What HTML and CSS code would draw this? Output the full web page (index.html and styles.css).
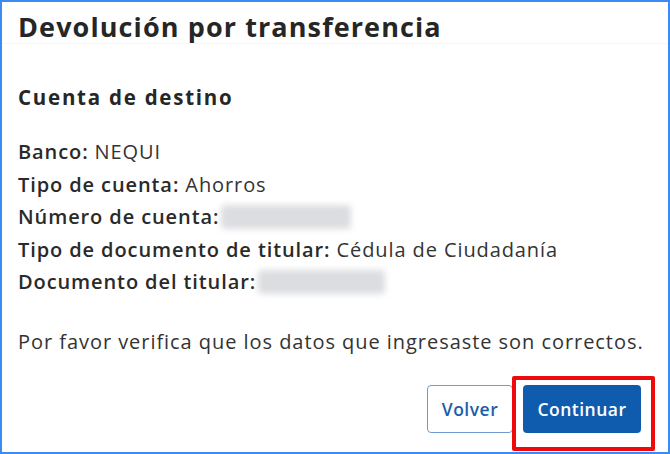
FILE: index.html
```html
<!DOCTYPE html>
<html lang="es">
<head>
<meta charset="utf-8">
<link rel="stylesheet" href="styles.css">
</head>
<body>
<div class="frame">
  <h1 class="title">Devolución por transferencia</h1>
  <div class="content">
    <h2 class="subtitle">Cuenta de destino</h2>
    <ul class="details">
      <li><span class="label">Banco:</span> NEQUI</li>
      <li><span class="label">Tipo de cuenta:</span> Ahorros</li>
      <li><span class="label">Número de cuenta:</span> <span class="blur blur-a"></span></li>
      <li><span class="label">Tipo de documento de titular:</span> Cédula de Ciudadanía</li>
      <li><span class="label">Documento del titular:</span> <span class="blur blur-b"></span></li>
    </ul>
    <p class="note">Por favor verifica que los datos que ingresaste son correctos.</p>
    <div class="actions">
      <button class="btn btn-outline">Volver</button>
      <div class="highlight">
        <button class="btn btn-primary">Continuar</button>
      </div>
    </div>
  </div>
</div>
</body>
</html>
```

FILE: styles.css
```css
* { box-sizing: border-box; }
html, body { margin: 0; padding: 0; background: #fff; }
body {
  font-family: "Open Sans", "Liberation Sans", sans-serif;
  color: #2b2b2b;
}
.frame {
  width: 670px;
  height: 454px;
  border: 2px solid #3d8af5;
  background: #fff;
  display: flex;
  flex-direction: column;
}
.title {
  margin: 0;
  padding: 8px 0 0 16px;
  font-size: 27px;
  line-height: 34px;
  letter-spacing: 1.1px;
  font-weight: 700;
  color: #262626;
  height: 42px;
  border-bottom: 1px solid #f4f6f8;
}
.content {
  padding: 0 0 0 16px;
  display: flex;
  flex-direction: column;
  flex: 1;
}
.subtitle {
  margin: 41px 0 0 0;
  font-size: 20.5px;
  line-height: 24px;
  letter-spacing: 1.75px;
  font-weight: 700;
  color: #262626;
}
.details {
  list-style: none;
  margin: 27px 0 0 0;
  padding: 0;
}
.details li {
  font-size: 20px;
  letter-spacing: 0.9px;
  line-height: 32.5px;
  height: 32.5px;
  display: flex;
  align-items: center;
  white-space: pre;
  color: #333;
}
.label { font-weight: 600; color: #2a2a2a; }
.blur {
  display: inline-block;
  height: 24px;
  background: #dcdde0;
  border-radius: 4px;
  filter: blur(3px);
  margin-left: 2px;
}
.blur-a { width: 130px; }
.blur-b { width: 127px; }
.note {
  margin: 31px 0 0 0;
  font-size: 20px;
  letter-spacing: 0.95px;
  line-height: 24px;
  color: #333;
}
.actions {
  margin-top: 22px;
  display: flex;
  justify-content: flex-end;
  align-items: flex-start;
  padding-right: 13px;
}
.btn {
  font-family: "Open Sans", "Liberation Sans", sans-serif;
  font-size: 17.5px;
  letter-spacing: 0.5px;
  height: 48px;
  border-radius: 4px;
  cursor: pointer;
}
.btn-outline {
  width: 86px;
  background: #fff;
  color: #1c5ea9;
  border: 1px solid #6f9bcf;
  font-weight: 600;
  margin-top: 9px;
}
.highlight {
  margin-left: -1px;
  padding: 5px 10px 14px 7px;
  border: 4px solid #ee0a0a;
  border-radius: 2px;
}
.btn-primary {
  width: 118px;
  background: #0f5cae;
  color: #fff;
  border: none;
  font-weight: 600;
}
```
